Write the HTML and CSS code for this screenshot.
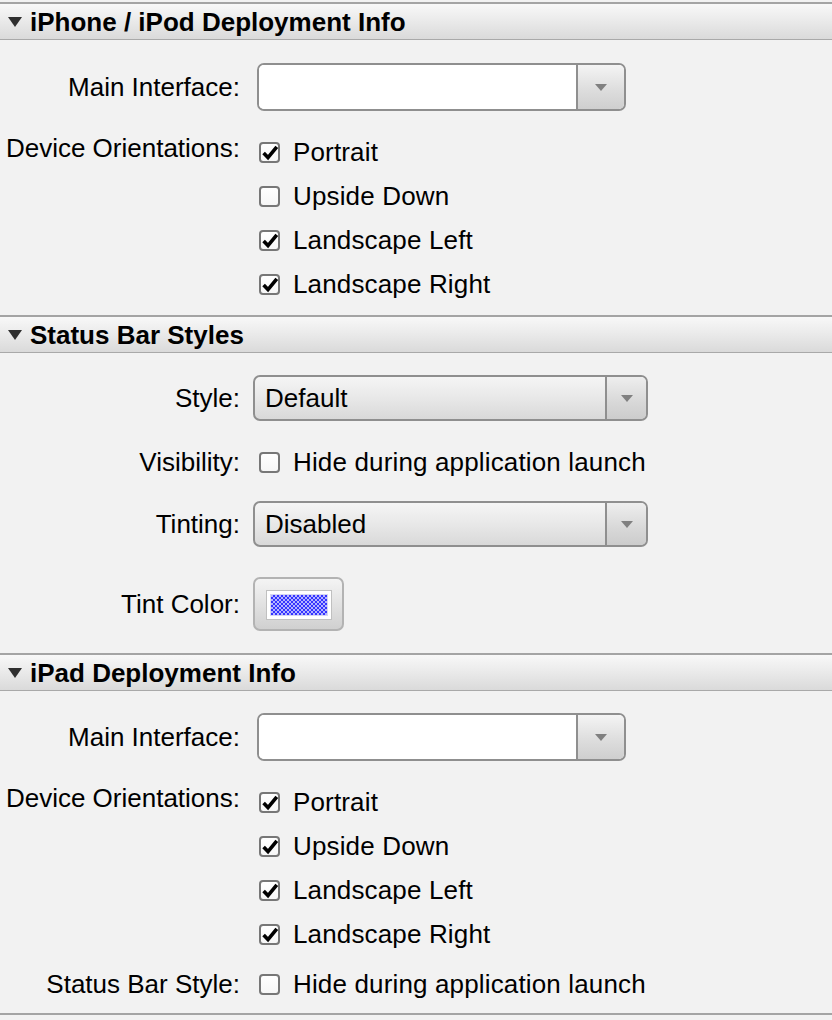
FILE: index.html
```html
<!DOCTYPE html>
<html>
<head>
<meta charset="utf-8">
<link rel="stylesheet" href="styles.css">
</head>
<body>
<div class="panel">

  <section class="sec sec-iphone">
    <div class="sec-head"><span class="disclosure"></span><span class="sec-title">iPhone / iPod Deployment Info</span></div>
    <div class="sec-body">
      <div class="row row-combo">
        <div class="lbl">Main Interface:</div>
        <div class="combo"><div class="combo-field"></div><div class="combo-btn"><span class="arrow"></span></div></div>
      </div>
      <div class="row row-checks">
        <div class="lbl lbl-top">Device Orientations:</div>
        <div class="checks">
          <div class="check"><span class="box"><svg viewBox="0 0 20 20"><path d="M3.6 10 L8 14.6 L16.8 3.8" /></svg></span>Portrait</div>
          <div class="check"><span class="box"></span>Upside Down</div>
          <div class="check"><span class="box"><svg viewBox="0 0 20 20"><path d="M3.6 10 L8 14.6 L16.8 3.8" /></svg></span>Landscape Left</div>
          <div class="check"><span class="box"><svg viewBox="0 0 20 20"><path d="M3.6 10 L8 14.6 L16.8 3.8" /></svg></span>Landscape Right</div>
        </div>
      </div>
    </div>
  </section>

  <section class="sec sec-status">
    <div class="sec-head"><span class="disclosure"></span><span class="sec-title">Status Bar Styles</span></div>
    <div class="sec-body">
      <div class="row row-popup">
        <div class="lbl">Style:</div>
        <div class="popup"><div class="popup-value">Default</div><div class="popup-btn"><span class="arrow"></span></div></div>
      </div>
      <div class="row row-vis">
        <div class="lbl">Visibility:</div>
        <div class="check"><span class="box"></span>Hide during application launch</div>
      </div>
      <div class="row row-popup row-tint">
        <div class="lbl">Tinting:</div>
        <div class="popup"><div class="popup-value">Disabled</div><div class="popup-btn"><span class="arrow"></span></div></div>
      </div>
      <div class="row row-color">
        <div class="lbl">Tint Color:</div>
        <div class="color-btn"><div class="color-well"><div class="color-swatch"></div></div></div>
      </div>
    </div>
  </section>

  <section class="sec sec-ipad">
    <div class="sec-head"><span class="disclosure"></span><span class="sec-title">iPad Deployment Info</span></div>
    <div class="sec-body">
      <div class="row row-combo">
        <div class="lbl">Main Interface:</div>
        <div class="combo"><div class="combo-field"></div><div class="combo-btn"><span class="arrow"></span></div></div>
      </div>
      <div class="row row-checks">
        <div class="lbl lbl-top">Device Orientations:</div>
        <div class="checks">
          <div class="check"><span class="box"><svg viewBox="0 0 20 20"><path d="M3.6 10 L8 14.6 L16.8 3.8" /></svg></span>Portrait</div>
          <div class="check"><span class="box"><svg viewBox="0 0 20 20"><path d="M3.6 10 L8 14.6 L16.8 3.8" /></svg></span>Upside Down</div>
          <div class="check"><span class="box"><svg viewBox="0 0 20 20"><path d="M3.6 10 L8 14.6 L16.8 3.8" /></svg></span>Landscape Left</div>
          <div class="check"><span class="box"><svg viewBox="0 0 20 20"><path d="M3.6 10 L8 14.6 L16.8 3.8" /></svg></span>Landscape Right</div>
        </div>
      </div>
      <div class="row row-sbs">
        <div class="lbl">Status Bar Style:</div>
        <div class="check"><span class="box"></span>Hide during application launch</div>
      </div>
    </div>
  </section>

  <div class="panel-end"></div>
</div>
</body>
</html>
```

FILE: styles.css
```css
html, body {
  margin: 0;
  padding: 0;
  background: #f2f2f2;
}

body {
  font-family: "Liberation Sans", Arial, Helvetica, sans-serif;
  font-size: 26px;
  color: #000;
  width: 832px;
  height: 1020px;
  overflow: hidden;
}

.panel {
  padding-top: 2px;
  display: flex;
  flex-direction: column;
}

.sec-head {
  box-sizing: border-box;
  height: 38px;
  border-top: 2px solid #a4a4a4;
  border-bottom: 1px solid #a9a9a9;
  background: linear-gradient(#f8f8f8, #ebebeb 45%, #dadada);
  display: flex;
  align-items: center;
  font-weight: bold;
  font-size: 26px;
  padding-left: 8px;
}

.disclosure {
  width: 0;
  height: 0;
  border-left: 7px solid transparent;
  border-right: 7px solid transparent;
  border-top: 10px solid #2f2f2f;
  margin-right: 8px;
  margin-top: 1px;
}

.sec-title {
  line-height: 1;
}

.sec-body {
  display: flex;
  flex-direction: column;
}

.sec-iphone .sec-body { padding: 23px 0 9px; height: 275px; box-sizing: border-box; }
.sec-status .sec-body { padding: 22px 0 22px; height: 300px; box-sizing: border-box; }
.sec-ipad .sec-body { padding: 22px 0 7px; height: 322px; box-sizing: border-box; }

.row {
  display: flex;
  align-items: center;
}

.lbl {
  width: 240px;
  flex: none;
  text-align: right;
  white-space: nowrap;
  padding-right: 17px;
  box-sizing: content-box;
}

.lbl-top {
  align-self: flex-start;
  line-height: 36px;
}

.row-checks {
  align-items: flex-start;
  margin-top: 19px;
}

.checks {
  display: flex;
  flex-direction: column;
}

.check {
  display: flex;
  align-items: center;
  height: 44px;
  white-space: nowrap;
  padding-left: 2px;
  letter-spacing: 0.15px;
}

.box {
  box-sizing: border-box;
  width: 21px;
  height: 21px;
  border: 2px solid #777;
  border-radius: 4px;
  background: linear-gradient(#ffffff, #f6f6f6);
  margin-right: 13px;
  position: relative;
  flex: none;
}

.box svg {
  position: absolute;
  left: -1px;
  top: -1px;
  width: 20px;
  height: 20px;
  overflow: visible;
}

.box svg path {
  fill: none;
  stroke: #000;
  stroke-width: 3.6;
  stroke-linecap: butt;
  stroke-linejoin: miter;
}

/* combo box */
.combo {
  box-sizing: border-box;
  width: 369px;
  height: 48px;
  border: 2px solid #8f8f8f;
  border-radius: 7px;
  display: flex;
  overflow: hidden;
  background: #fff;
}

.combo-field {
  flex: 1;
  background: #fff;
}

.combo-btn {
  width: 46px;
  border-left: 2px solid #8f8f8f;
  background: linear-gradient(#f4f4f4, #dcdcdc 60%, #cfcfcf);
  display: flex;
  align-items: center;
  justify-content: center;
}

.arrow {
  width: 0;
  height: 0;
  border-left: 6px solid transparent;
  border-right: 6px solid transparent;
  border-top: 7px solid #808080;
  margin-top: 1px;
}

/* popup */
.row-popup .popup {
  margin-left: -4px;
}

.popup {
  box-sizing: border-box;
  width: 395px;
  height: 46px;
  border: 2px solid #8f8f8f;
  border-radius: 7px;
  display: flex;
  overflow: hidden;
  background: linear-gradient(#f5f5f5, #e8e8e8 50%, #d9d9d9);
}

.popup-value {
  flex: 1;
  padding-left: 10px;
  display: flex;
  align-items: center;
  line-height: 1;
}

.popup-btn {
  width: 39px;
  border-left: 2px solid #8f8f8f;
  display: flex;
  align-items: center;
  justify-content: center;
  background: linear-gradient(#eeeeee, #d8d8d8 60%, #cccccc);
}

.row-vis {
  margin-top: 19px;
}

.row-vis .check,
.row-sbs .check {
  height: 44px;
}

.row-tint {
  margin-top: 17px;
}

.row-color {
  margin-top: 30px;
}

.color-btn {
  margin-left: -4px;
  box-sizing: border-box;
  width: 91px;
  height: 54px;
  border: 2px solid #b3b3b3;
  border-radius: 7px;
  background: linear-gradient(#f4f4f4, #e2e2e2 50%, #d0d0d0);
  display: flex;
  align-items: center;
  justify-content: center;
}

.color-well {
  box-sizing: border-box;
  width: 66px;
  height: 30px;
  border: 1px solid #c0c0c0;
  background: #fff;
  padding: 4px;
  margin-top: 1px;
}

.color-swatch {
  width: 100%;
  height: 100%;
  outline: 1px solid #d6d6f2;
  background-color: #ffffff;
  background-image: conic-gradient(#3434ff 25%, #b4b4ff 25% 50%, #3434ff 50% 75%, #b4b4ff 75%);
  background-size: 4px 4px;
}

.row-sbs {
  margin-top: 6px;
}

.panel-end {
  height: 3px;
  border-top: 2px solid #a4a4a4;
}
```
